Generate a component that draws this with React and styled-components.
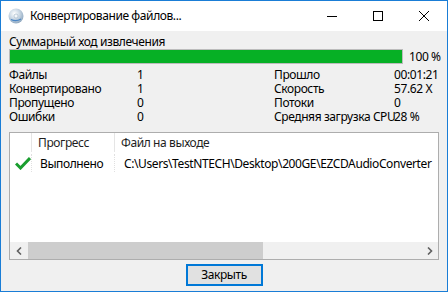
import React from "react";
import styled, { createGlobalStyle } from "styled-components";

const GlobalStyle = createGlobalStyle`
  html, body {
    margin: 0;
    padding: 0;
    background: #ffffff;
  }
  * {
    box-sizing: border-box;
  }
`;

const Window = styled.div`
  width: 448px;
  height: 292px;
  border: 1px solid #1a7dd6;
  display: flex;
  flex-direction: column;
  background: #f0f0f0;
  font-family: "Noto Sans", "Liberation Sans", sans-serif;
  font-size: 12px;
  letter-spacing: -0.4px;
  color: #000;
  overflow: hidden;
`;

const TitleBar = styled.div`
  height: 30px;
  flex: none;
  background: #fff;
  display: flex;
  align-items: center;
  padding-left: 7px;
`;

const TitleText = styled.div`
  margin-left: 6px;
  flex: 1;
  line-height: 16px;
`;

const Controls = styled.div`
  display: flex;
  height: 100%;
`;

const ControlBtn = styled.div`
  width: 46px;
  height: 100%;
  display: flex;
  align-items: center;
  justify-content: center;
`;

const Client = styled.div`
  flex: 1;
  display: flex;
  flex-direction: column;
  padding: 3px 8px 0 8px;
`;

const Caption = styled.div`
  line-height: 15px;
`;

const ProgressRow = styled.div`
  display: flex;
  align-items: center;
  height: 15px;
  white-space: nowrap;
`;

const Bar = styled.div`
  width: 394px;
  height: 15px;
  border: 1px solid #bcbcbc;
  background: #e6e6e6;
  flex: none;
`;

const Fill = styled.div`
  height: 100%;
  background: #06b025;
`;

const Percent = styled.div`
  margin-left: 6px;
  line-height: 15px;
`;

const Stats = styled.div`
  margin-top: 4px;
  display: grid;
  grid-template-columns: 128px 137px 120px auto;
  grid-auto-rows: 14px;
  line-height: 14px;
  white-space: nowrap;
`;

const Cell = styled.div`
  margin-left: ${(p) => p.$shift || 0}px;
`;

const ListBox = styled.div`
  margin-top: 8px;
  height: 128px;
  border: 1px solid #adadad;
  background: #fff;
  display: flex;
  flex-direction: column;
  overflow: hidden;
`;

const ListBody = styled.div`
  flex: 1;
  overflow: hidden;
`;

const HeaderRow = styled.div`
  display: flex;
  height: 19px;
  align-items: stretch;
  color: #1e1e1e;
`;

const Col = styled.div`
  flex: none;
  width: ${(p) => p.$w}px;
  padding-left: ${(p) => p.$pad || 0}px;
  display: flex;
  align-items: center;
  white-space: nowrap;
  border-right: ${(p) => (p.$sep ? p.$sep : "none")};
`;

const DataRow = styled.div`
  display: flex;
  height: 18px;
  margin-top: 2px;
`;

const ScrollBar = styled.div`
  height: 17px;
  flex: none;
  display: flex;
  background: #f0f0f0;
`;

const Arrow = styled.div`
  width: 17px;
  display: flex;
  align-items: center;
  justify-content: center;
`;

const Track = styled.div`
  flex: 1;
  display: flex;
  align-items: stretch;
  padding: 0 1px;
`;

const Thumb = styled.div`
  width: 235px;
  background: #cdcdcd;
`;

const Footer = styled.div`
  display: flex;
  justify-content: center;
  margin-top: 4px;
`;

const Button = styled.div`
  width: 77px;
  height: 22px;
  border: 2px solid #0078d7;
  background: #e1e1e1;
  display: flex;
  align-items: center;
  justify-content: center;
  padding-bottom: 1px;
`;

const stats = [
  ["Файлы", "1", "Прошло", "00:01:21"],
  ["Конвертировано", "1", "Скорость", "57.62 X"],
  ["Пропущено", "0", "Потоки", "0"],
  ["Ошибки", "0", "Средняя загрузка CPU", "28 %"],
];

function AppIcon() {
  return (
    <svg width="16" height="16" viewBox="0 0 16 16">
      <defs>
        <radialGradient id="disc" cx="0.4" cy="0.35" r="0.7">
          <stop offset="0" stopColor="#ffffff" />
          <stop offset="0.5" stopColor="#c9d7e4" />
          <stop offset="1" stopColor="#8aa4bd" />
        </radialGradient>
      </defs>
      <circle cx="8" cy="8" r="7.5" fill="url(#disc)" />
      <circle cx="8" cy="8" r="2" fill="#f4f7fa" stroke="#9fb3c6" strokeWidth="0.6" />
      <path d="M3 11.5 Q8 14 13 11" stroke="#4a86c5" strokeWidth="1.2" fill="none" />
    </svg>
  );
}

function Check() {
  return (
    <svg width="16" height="14" viewBox="0 0 16 14">
      <path d="M1 7.5 L5.5 12 L15 2" stroke="#1a9e2f" strokeWidth="3" fill="none" />
    </svg>
  );
}

export default function App() {
  return (
    <>
      <GlobalStyle />
      <Window>
        <TitleBar>
          <AppIcon />
          <TitleText>Конвертирование файлов...</TitleText>
          <Controls>
            <ControlBtn>
              <svg width="10" height="10" viewBox="0 0 10 10">
                <path d="M0 5.5 H10" stroke="#000" strokeWidth="1" />
              </svg>
            </ControlBtn>
            <ControlBtn>
              <svg width="10" height="10" viewBox="0 0 10 10">
                <rect x="0.5" y="0.5" width="9" height="9" stroke="#000" fill="none" />
              </svg>
            </ControlBtn>
            <ControlBtn>
              <svg width="10" height="10" viewBox="0 0 10 10">
                <path d="M0 0 L10 10 M10 0 L0 10" stroke="#000" strokeWidth="1" />
              </svg>
            </ControlBtn>
          </Controls>
        </TitleBar>
        <Client>
          <Caption>Суммарный ход извлечения</Caption>
          <ProgressRow>
            <Bar>
              <Fill style={{ width: "100%" }} />
            </Bar>
            <Percent>100 %</Percent>
          </ProgressRow>
          <Stats>
            {stats.map((r) => r.map((c, i) => <Cell key={r[0] + i}>{c}</Cell>))}
          </Stats>
          <ListBox>
            <ListBody>
              <HeaderRow>
                <Col $w={22} $sep="1px solid #e5e5e5" />
                <Col $w={83} $pad={6} $sep="1px solid #e5e5e5">Прогресс</Col>
                <Col $w={300} $pad={6}>Файл на выходе</Col>
              </HeaderRow>
              <DataRow>
                <Col $w={22} $pad={5} $sep="1px dotted #e0e0e0">
                  <Check />
                </Col>
                <Col $w={83} $pad={8} $sep="1px dotted #e0e0e0">Выполнено</Col>
                <Col $w={330} $pad={9}>C:\Users\TestNTECH\Desktop\200GE\EZCDAudioConverter</Col>
              </DataRow>
            </ListBody>
            <ScrollBar>
              <Arrow>
                <svg width="6" height="8" viewBox="0 0 6 8">
                  <path d="M5 0.5 L1.5 4 L5 7.5" stroke="#606060" strokeWidth="1.6" fill="none" />
                </svg>
              </Arrow>
              <Track>
                <Thumb />
              </Track>
              <Arrow>
                <svg width="6" height="8" viewBox="0 0 6 8">
                  <path d="M1 0.5 L4.5 4 L1 7.5" stroke="#606060" strokeWidth="1.6" fill="none" />
                </svg>
              </Arrow>
            </ScrollBar>
          </ListBox>
          <Footer>
            <Button>Закрыть</Button>
          </Footer>
        </Client>
      </Window>
    </>
  );
}
